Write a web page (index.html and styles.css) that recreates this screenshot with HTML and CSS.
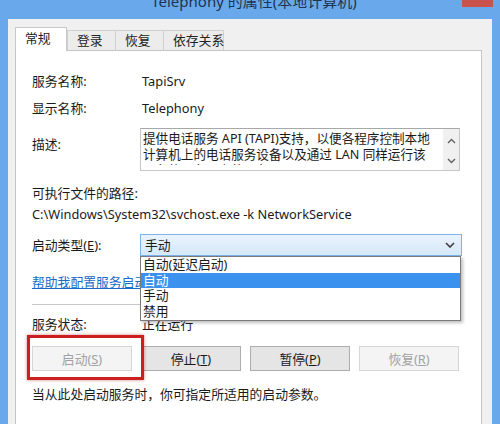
FILE: index.html
```html
<!DOCTYPE html>
<html lang="zh-CN">
<head>
    <meta charset="UTF-8">
    <title>Telephony 的属性(本地计算机)</title>
    <link rel="stylesheet" href="styles.css">
</head>
<body>
<div class="window">
    <!-- Title bar -->
    <div class="titlebar">
        <span class="title">Telephony 的属性(本地计算机)</span>
        <span class="close-btn"></span>
    </div>

    <div class="client">
        <div class="tabs">
            <div class="tab tab-active">常规</div>
            <div class="tab">登录</div>
            <div class="tab">恢复</div>
            <div class="tab">依存关系</div>
        </div>

        <div class="panel">
            <div class="row r-name">
                <span class="label">服务名称:</span>
                <span class="value">TapiSrv</span>
            </div>
            <div class="row r-display">
                <span class="label">显示名称:</span>
                <span class="value">Telephony</span>
            </div>
            <div class="row r-desc">
                <span class="label desc-label">描述:</span>
                <div class="desc-box">
                    <div class="desc-text">提供电话服务 API (TAPI)支持，以便各程序控制本地计算机上的电话服务设备以及通过 LAN 同样运行该服务的服务器上的设备。</div>
                    <div class="scrollbar">
                        <svg width="9" height="6" viewBox="0 0 9 6"><path d="M1 5 L4.5 1.5 L8 5" fill="none" stroke="#606060" stroke-width="1.4"/></svg>
                        <svg width="9" height="6" viewBox="0 0 9 6"><path d="M1 1 L4.5 4.5 L8 1" fill="none" stroke="#606060" stroke-width="1.4"/></svg>
                    </div>
                </div>
            </div>
            <div class="plain r-exe">可执行文件的路径:</div>
            <div class="plain r-path">C:\Windows\System32\svchost.exe -k NetworkService</div>

            <div class="row r-start">
                <span class="label">启动类型(<u>E</u>):</span>
                <div class="combo-wrap">
                    <div class="combo">
                        <span>手动</span>
                        <svg width="10" height="6" viewBox="0 0 10 6"><path d="M1 1 L5 5 L9 1" fill="none" stroke="#3c3c3c" stroke-width="1.6"/></svg>
                    </div>
                    <ul class="dropdown">
                        <li>自动(延迟启动)</li>
                        <li class="selected">自动</li>
                        <li>手动</li>
                        <li>禁用</li>
                    </ul>
                </div>
            </div>

            <div class="plain r-link"><a class="help-link">帮助我配置服务启动选项。</a></div>
            <div class="separator"></div>

            <div class="row r-status">
                <span class="label">服务状态:</span>
                <span class="value">正在运行</span>
            </div>

            <div class="buttons">
                <div class="highlight-wrap">
                    <button class="btn" disabled>启动(<u>S</u>)</button>
                    <div class="highlight"></div>
                </div>
                <button class="btn">停止(<u>T</u>)</button>
                <button class="btn">暂停(<u>P</u>)</button>
                <button class="btn" disabled>恢复(<u>R</u>)</button>
            </div>

            <div class="plain r-hint">当从此处启动服务时，你可指定所适用的启动参数。</div>
        </div>
    </div>
</div>
</body>
</html>
```

FILE: styles.css
```css
* {
  margin: 0;
  padding: 0;
  box-sizing: border-box;
}

body {
  width: 500px;
  height: 424px;
  overflow: hidden;
  font-family: "Noto Sans", "Noto Sans CJK SC", sans-serif;
  font-size: 12.8px;
  color: #1a1a1a;
}

.window {
  height: 424px;
  background: #6aa8ec;
  padding: 0 8px;
  display: flex;
  flex-direction: column;
}

/* title bar, text cut by the top of the shot */
.titlebar {
  height: 19px;
  display: flex;
  justify-content: center;
  position: relative;
}

.title {
  font-size: 15px;
  line-height: 20px;
  margin-top: -9px;
  color: #1e3450;
  margin-left: 8px;
}

.close-btn {
  position: absolute;
  right: -1px;
  top: 0;
  width: 31px;
  height: 7px;
  background: #c9524c;
}

.client {
  flex: 1;
  background: #f0f0f0;
  padding: 8px 10px 0 7px;
  display: flex;
  flex-direction: column;
}

.tabs {
  display: flex;
  align-items: flex-end;
  height: 23px;
  position: relative;
  z-index: 1;
}

.tab {
  height: 20px;
  line-height: 18px;
  padding: 0 0 0 9px;
  border: 1px solid #d0d0d0;
  border-bottom: none;
  background: #ececec;
  margin-left: -1px;
  color: #222;
  white-space: nowrap;
}

.tab:nth-child(2) { width: 49px; }
.tab:nth-child(3) { width: 49px; }
.tab:nth-child(4) { width: 61px; }

.tab-active {
  width: 52px;
  height: 24px;
  line-height: 20px;
  background: #fff;
  margin-left: 0;
  margin-right: 1px;
  margin-bottom: -1px;
  border-color: #c8c8c8;
}

.panel {
  flex: 1;
  background: #fff;
  border: 1px solid #c4c4c4;
  border-bottom: none;
  padding: 22px 0 0 16px;
}

.row {
  display: flex;
  align-items: center;
  line-height: 16px;
}

.label {
  width: 108px;
  flex-shrink: 0;
}

.value {
  padding-left: 2px;
}

.plain {
  line-height: 16px;
  white-space: nowrap;
}

.r-display { margin-top: 11px; }

.r-desc {
  margin-top: 12px;
  align-items: flex-start;
}

.desc-label {
  margin-top: 8px;
}

.desc-box {
  width: 320px;
  height: 43px;
  border: 1px solid #c6c6c6;
  border-top-color: #a8a8a8;
  display: flex;
  overflow: hidden;
}

.desc-text {
  flex: 1;
  height: 36px;
  overflow: hidden;
  padding: 2px 10px 0 2px;
  line-height: 16px;
  font-size: 12.6px;
}

.scrollbar {
  width: 16px;
  flex-shrink: 0;
  background: #f0f0f0;
  display: flex;
  flex-direction: column;
  align-items: center;
  justify-content: space-between;
  padding: 9px 0 6px;
}

.r-exe { margin-top: 14px; }
.r-path { margin-top: 5px; }

.r-start { margin-top: 12px; }

.combo-wrap {
  position: relative;
}

.combo {
  width: 322px;
  height: 22px;
  border: 1px solid #7eb4ea;
  background: linear-gradient(#eaf3fc, #d4e8fa);
  display: flex;
  align-items: center;
  justify-content: space-between;
  padding: 0 6px 0 4px;
}

.dropdown {
  position: absolute;
  left: 0;
  top: 22px;
  width: 321px;
  list-style: none;
  background: #fff;
  border: 1px solid #7a7a7a;
  box-shadow: 2px 2px 3px rgba(0, 0, 0, 0.25);
  z-index: 5;
  padding-bottom: 1px;
}

.dropdown li {
  height: 15.5px;
  line-height: 15px;
  padding-left: 2px;
}

.dropdown .selected {
  background: #3b91ee;
  color: #fff;
}

.r-link { margin-top: 18px; }

.help-link {
  color: #1a6bc8;
  text-decoration: underline;
}

.separator {
  margin-top: 14px;
  width: 428px;
  height: 1px;
  background: #c8c8c8;
}

.r-status { margin-top: 11px; }

.buttons {
  margin-top: 14px;
  display: flex;
  gap: 9px;
}

.btn {
  width: 100px;
  height: 25px;
  font-family: inherit;
  font-size: 12.8px;
  color: #1a1a1a;
  background: #e5e5e5;
  border: 1px solid #adadad;
}

.btn:disabled {
  background: #f4f4f4;
  border-color: #d6d6d6;
  color: #a2a2a2;
}

.highlight-wrap {
  position: relative;
  display: flex;
}

.highlight {
  position: absolute;
  left: -5px;
  top: -11px;
  right: -12px;
  bottom: -9px;
  border: 3px solid #cc1f1f;
  box-shadow: 0 0 3px rgba(180, 0, 0, 0.5);
}

.r-hint { margin-top: 15px; }
```
